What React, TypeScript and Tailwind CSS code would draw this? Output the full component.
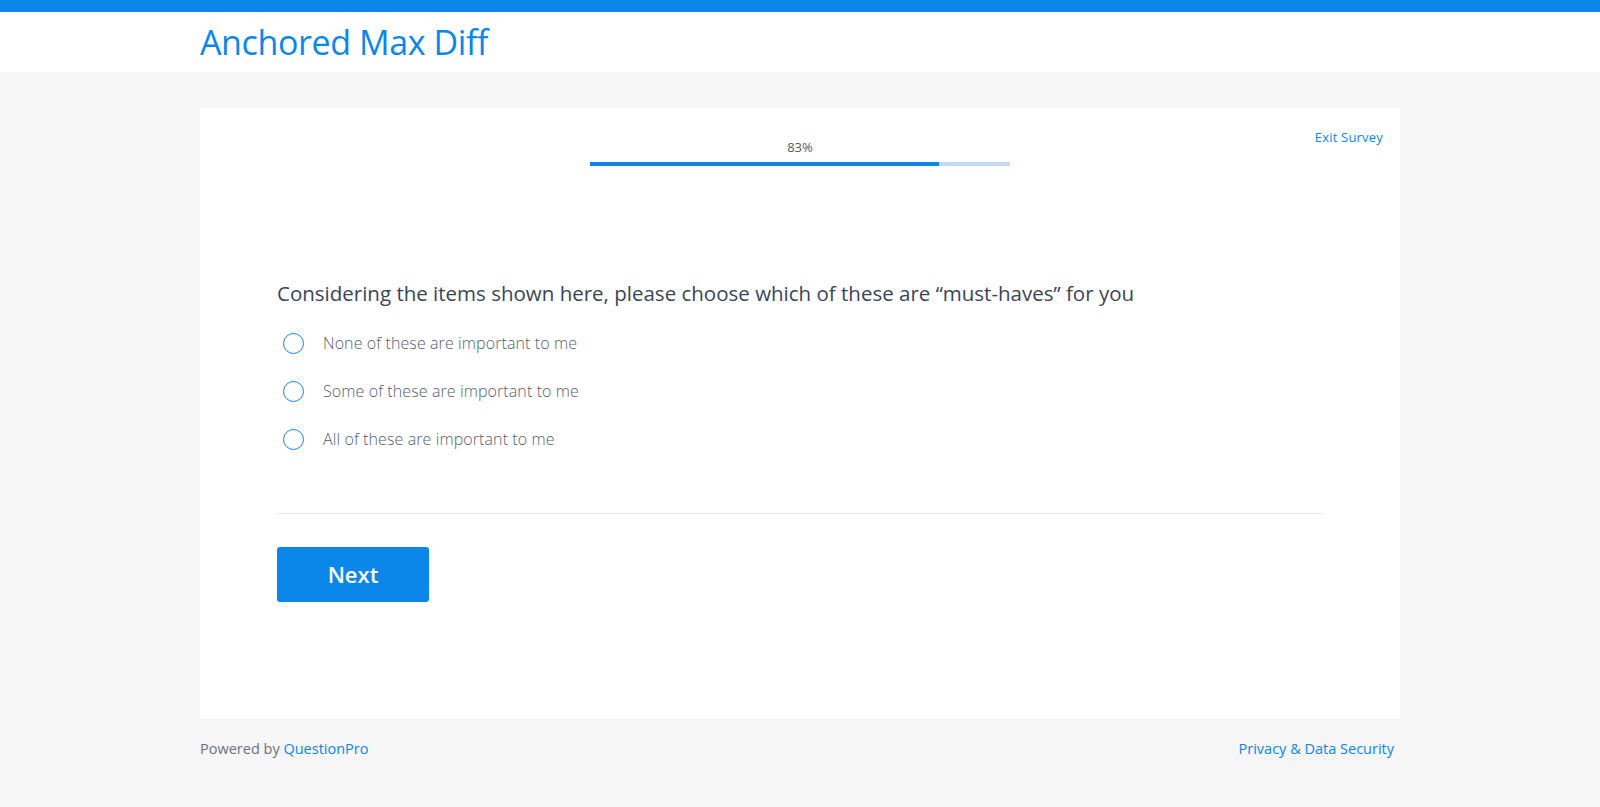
import React, { useState } from "react";

const options = [
  "None of these are important to me",
  "Some of these are important to me",
  "All of these are important to me",
];

export default function App() {
  const [selected, setSelected] = useState<number | null>(null);
  const progress = 83;

  return (
    <div className="min-h-[807px] bg-[#f6f6f6] font-['Open_Sans',sans-serif]">
      {/* top strip + header */}
      <div className="h-3 bg-[#0b87e9]" />
      <header className="bg-white h-[60px] flex items-center">
        <div className="w-[1200px] mx-auto">
          <h1 className="text-[34px] leading-none text-[#0b87e9] font-normal tracking-[-0.4px]">
            Anchored Max Diff
          </h1>
        </div>
      </header>

      <main className="w-[1200px] mx-auto mt-9">
        <div className="bg-white h-[611px] relative px-[77px] pt-[33px]">
          <a href="#" className="absolute right-[17px] top-[20px] text-[13px] tracking-[0.2px] text-[#0b87e9]">
            Exit Survey
          </a>

          {/* progress */}
          <div className="flex flex-col items-center">
            <span className="text-[13px] text-[#505a68] leading-none">{progress}%</span>
            <div className="w-[420px] h-1 bg-[#c3dbf5] mt-[8px]">
              <div className="h-full bg-[#0b87e9]" style={{ width: `${progress}%` }} />
            </div>
          </div>

          {/* question */}
          <h2 className="mt-[115px] text-[20.5px] leading-6 text-[#3a4556] font-normal">
            Considering the items shown here, please choose which of these are “must-haves” for you
          </h2>

          <div className="mt-[27px] flex flex-col gap-[26px] pl-[6px]">
            {options.map((opt, i) => (
              <label
                key={opt}
                className="flex items-center gap-[19px] cursor-pointer"
                onClick={() => setSelected(i)}
              >
                <span className="w-[21px] h-[21px] rounded-full border border-[#0b87e9] flex items-center justify-center">
                  {selected === i && <span className="w-[11px] h-[11px] rounded-full bg-[#0b87e9]" />}
                </span>
                <span className="text-[16px] tracking-[0.1px] leading-[22px] text-[#555f6d] font-light">{opt}</span>
              </label>
            ))}
          </div>

          <div className="mt-[63px] border-t border-[#e8e8e8]" />

          <button className="mt-[33px] w-[152px] h-[55px] rounded-[3px] bg-[#0b87e9] text-white text-[22px] font-semibold">
            Next
          </button>
        </div>

        <footer className="flex justify-between pt-[19px] text-[14.5px] px-0">
          <span className="text-[#6b7280]">
            Powered by <a href="#" className="text-[#0b87e9]">QuestionPro</a>
          </span>
          <a href="#" className="text-[#0b87e9] mr-[6px]">Privacy &amp; Data Security</a>
        </footer>
      </main>
    </div>
  );
}
